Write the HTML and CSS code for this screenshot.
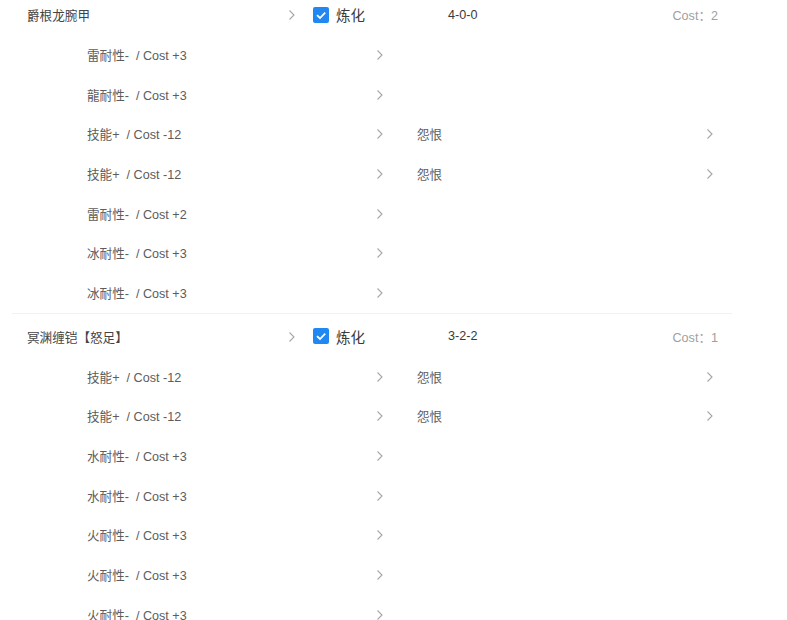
FILE: index.html
```html
<!DOCTYPE html>
<html lang="zh">
<head>
<meta charset="utf-8">
<link rel="stylesheet" href="styles.css">
</head>
<body>
<div class="list">
  <div class="group">
    <div class="main-row">
      <div class="cell name-cell"><span class="name">爵根龙腕甲</span><svg class="chev" viewBox="0 0 6 10"><polyline points="0.5,0.5 5,5 0.5,9.5"/></svg></div>
      <label class="check"><span class="box"><svg viewBox="0 0 16 16"><polyline points="4,8.2 7,11 12.2,5.6"/></svg></span><span class="check-label">炼化</span></label>
      <span class="value">4-0-0</span>
      <span class="cost">Cost：2</span>
    </div>
    <div class="sub-row"><div class="cell"><span>雷耐性-&nbsp; / Cost +3</span><svg class="chev" viewBox="0 0 6 10"><polyline points="0.5,0.5 5,5 0.5,9.5"/></svg></div></div>
    <div class="sub-row"><div class="cell"><span>龍耐性-&nbsp; / Cost +3</span><svg class="chev" viewBox="0 0 6 10"><polyline points="0.5,0.5 5,5 0.5,9.5"/></svg></div></div>
    <div class="sub-row"><div class="cell"><span>技能+&nbsp; / Cost -12</span><svg class="chev" viewBox="0 0 6 10"><polyline points="0.5,0.5 5,5 0.5,9.5"/></svg></div><div class="cell"><span>怨恨</span><svg class="chev" viewBox="0 0 6 10"><polyline points="0.5,0.5 5,5 0.5,9.5"/></svg></div></div>
    <div class="sub-row"><div class="cell"><span>技能+&nbsp; / Cost -12</span><svg class="chev" viewBox="0 0 6 10"><polyline points="0.5,0.5 5,5 0.5,9.5"/></svg></div><div class="cell"><span>怨恨</span><svg class="chev" viewBox="0 0 6 10"><polyline points="0.5,0.5 5,5 0.5,9.5"/></svg></div></div>
    <div class="sub-row"><div class="cell"><span>雷耐性-&nbsp; / Cost +2</span><svg class="chev" viewBox="0 0 6 10"><polyline points="0.5,0.5 5,5 0.5,9.5"/></svg></div></div>
    <div class="sub-row"><div class="cell"><span>冰耐性-&nbsp; / Cost +3</span><svg class="chev" viewBox="0 0 6 10"><polyline points="0.5,0.5 5,5 0.5,9.5"/></svg></div></div>
    <div class="sub-row"><div class="cell"><span>冰耐性-&nbsp; / Cost +3</span><svg class="chev" viewBox="0 0 6 10"><polyline points="0.5,0.5 5,5 0.5,9.5"/></svg></div></div>
  </div>
  <div class="group">
    <div class="main-row">
      <div class="cell name-cell"><span class="name">冥渊缠铠【怒足】</span><svg class="chev" viewBox="0 0 6 10"><polyline points="0.5,0.5 5,5 0.5,9.5"/></svg></div>
      <label class="check"><span class="box"><svg viewBox="0 0 16 16"><polyline points="4,8.2 7,11 12.2,5.6"/></svg></span><span class="check-label">炼化</span></label>
      <span class="value">3-2-2</span>
      <span class="cost">Cost：1</span>
    </div>
    <div class="sub-row"><div class="cell"><span>技能+&nbsp; / Cost -12</span><svg class="chev" viewBox="0 0 6 10"><polyline points="0.5,0.5 5,5 0.5,9.5"/></svg></div><div class="cell"><span>怨恨</span><svg class="chev" viewBox="0 0 6 10"><polyline points="0.5,0.5 5,5 0.5,9.5"/></svg></div></div>
    <div class="sub-row"><div class="cell"><span>技能+&nbsp; / Cost -12</span><svg class="chev" viewBox="0 0 6 10"><polyline points="0.5,0.5 5,5 0.5,9.5"/></svg></div><div class="cell"><span>怨恨</span><svg class="chev" viewBox="0 0 6 10"><polyline points="0.5,0.5 5,5 0.5,9.5"/></svg></div></div>
    <div class="sub-row"><div class="cell"><span>水耐性-&nbsp; / Cost +3</span><svg class="chev" viewBox="0 0 6 10"><polyline points="0.5,0.5 5,5 0.5,9.5"/></svg></div></div>
    <div class="sub-row"><div class="cell"><span>水耐性-&nbsp; / Cost +3</span><svg class="chev" viewBox="0 0 6 10"><polyline points="0.5,0.5 5,5 0.5,9.5"/></svg></div></div>
    <div class="sub-row"><div class="cell"><span>火耐性-&nbsp; / Cost +3</span><svg class="chev" viewBox="0 0 6 10"><polyline points="0.5,0.5 5,5 0.5,9.5"/></svg></div></div>
    <div class="sub-row"><div class="cell"><span>火耐性-&nbsp; / Cost +3</span><svg class="chev" viewBox="0 0 6 10"><polyline points="0.5,0.5 5,5 0.5,9.5"/></svg></div></div>
    <div class="sub-row"><div class="cell"><span>火耐性-&nbsp; / Cost +3</span><svg class="chev" viewBox="0 0 6 10"><polyline points="0.5,0.5 5,5 0.5,9.5"/></svg></div></div>
  </div>
</div>
</body>
</html>
```
FILE: styles.css
```css
html, body {
  margin: 0;
  padding: 0;
  background: #ffffff;
  overflow: hidden;
}
body {
  font-family: "Liberation Sans", "Noto Sans CJK SC", sans-serif;
  font-size: 12.6px;
  color: #444444;
}
.list {
  width: 720px;
  margin: -9px 0 0 12px;
}
.group {
  padding-top: 4px;
  border-bottom: 1px solid #f2f2f2;
}
.group + .group {
  padding-top: 3px;
}
.group:last-child {
  border-bottom: none;
}
.main-row, .sub-row {
  height: 39.7px;
  display: flex;
  align-items: center;
}
.main-row {
  padding: 0 14px 0 15px;
}
.sub-row {
  padding-left: 75px;
  gap: 33px;
}
.cell {
  display: flex;
  align-items: center;
  justify-content: space-between;
  width: 297px;
  color: #5c5c5c;
}
.name-cell {
  width: 269px;
  color: #444444;
}
.chev {
  width: 6px;
  height: 10px;
  flex: none;
  margin-right: 1px;
  margin-top: 1px;
}
.chev polyline {
  fill: none;
  stroke: #a6a6a6;
  stroke-width: 1.1;
}
.check {
  display: flex;
  align-items: center;
  margin-left: 17px;
  width: 135px;
}
.box {
  width: 16px;
  height: 16px;
  background: #2188f2;
  border-radius: 2px;
  display: flex;
}
.box svg {
  width: 16px;
  height: 16px;
}
.box polyline {
  fill: none;
  stroke: #ffffff;
  stroke-width: 1.8;
}
.check-label {
  margin-left: 7px;
  font-size: 14.5px;
  color: #3a3a3a;
}
.value {
  flex: 1;
  color: #3a3a3a;
}
.cost {
  color: #a0a0a0;
}
```
